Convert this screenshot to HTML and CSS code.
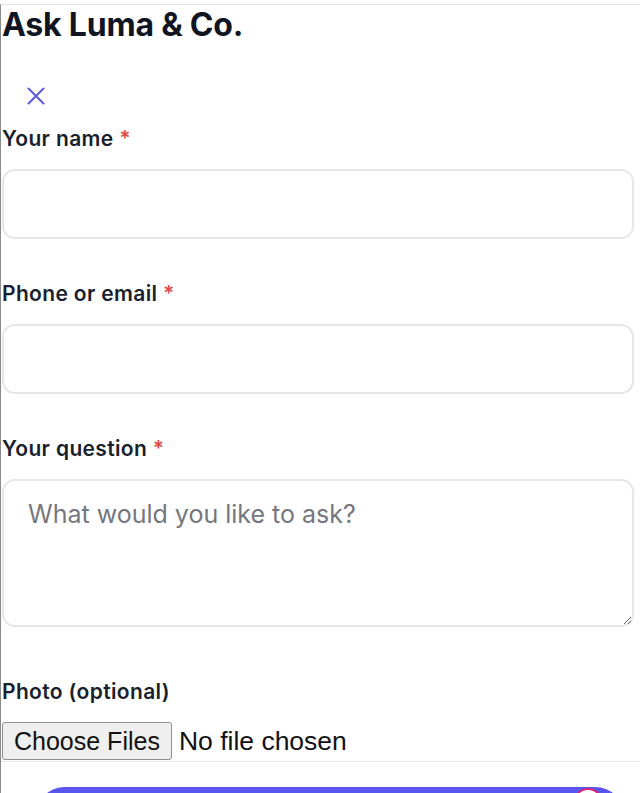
FILE: index.html
```html
<!DOCTYPE html>
<html lang="en">
<head>
<meta charset="utf-8">
<title>Ask Luma &amp; Co.</title>
<link rel="stylesheet" href="styles.css">
</head>
<body>
<div class="frame">
  <form class="form">
    <h1 class="title">Ask Luma &amp; Co.</h1>
    <button type="button" class="close" aria-label="Close">
      <svg width="18" height="18" viewBox="0 0 18 18" fill="none" stroke="currentColor" stroke-width="2" stroke-linecap="round"><path d="M1.5 1.5L16.5 16.5M16.5 1.5L1.5 16.5"/></svg>
    </button>
    <div class="field field-first">
      <label class="label" for="name">Your name <span class="req">*</span></label>
      <input class="input" id="name" type="text">
    </div>
    <div class="field">
      <label class="label" for="contact">Phone or email <span class="req">*</span></label>
      <input class="input" id="contact" type="text">
    </div>
    <div class="field">
      <label class="label" for="q">Your question <span class="req">*</span></label>
      <textarea class="textarea" id="q" placeholder="What would you like to ask?"></textarea>
    </div>
    <div class="field field-photo">
      <label class="label" for="photo">Photo (optional)</label>
      <input class="file" id="photo" type="file" multiple>
    </div>
  </form>
  <div class="footer">
    <div class="submit">
      <span class="bubble"></span>
    </div>
  </div>
</div>
</body>
</html>
```
FILE: styles.css
```css
html, body {
  margin: 0;
  padding: 0;
  background: #ffffff;
  overflow: hidden;
}
body {
  font-family: Inter, "Noto Sans", sans-serif;
  color: #161b2c;
}
.frame {
  margin-top: 4px;
  border-top: 1px solid #e3e3e3;
  border-left: 1px solid #8a8a8a;
  height: 800px;
}
.form {
  padding: 0 6px 1px 1px;
}
.title {
  margin: 0;
  padding-top: 1px;
  font-size: 32px;
  line-height: 38px;
  font-weight: 700;
  color: #111522;
  letter-spacing: -0.2px;
}
.close {
  display: flex;
  width: 18px;
  height: 18px;
  padding: 0;
  margin: 43px 0 0 25px;
  border: 0;
  background: none;
  color: #5b5bdc;
}
.field {
  margin-top: 43px;
}
.field-first {
  margin-top: 22px;
}
.field-photo {
  margin-top: 53px;
}
.label {
  display: block;
  font-size: 21px;
  line-height: 24px;
  font-weight: 600;
  letter-spacing: 0.35px;
  color: #1a1f2e;
}
.req {
  color: #e24a4a;
}
.input,
.textarea {
  display: block;
  box-sizing: border-box;
  width: 100%;
  margin: 18px 0 0;
  border: 2px solid #e5e6ea;
  border-radius: 13px;
  background: #fff;
  font-family: Inter, "Noto Sans", sans-serif;
  font-size: 25px;
  color: #1a1f2e;
  outline: none;
}
.input {
  height: 70px;
  padding: 0 24px;
}
.textarea {
  height: 148px;
  padding: 15px 24px;
  line-height: 36px;
  resize: vertical;
}
.textarea::placeholder {
  color: #75777d;
}
.file {
  display: block;
  margin-top: 18px;
  font-family: "Liberation Sans", Arial, sans-serif;
  font-size: 26.5px;
  color: #111;
  height: 38px;
}
.file::file-selector-button {
  font-family: "Liberation Sans", Arial, sans-serif;
  font-size: 25px;
  height: 38px;
  padding: 0 11px;
  margin: 0 7px 0 0;
  border: 1px solid #8f8f8f;
  border-radius: 3px;
  background: #efefef;
  color: #111;
}
.footer {
  border-top: 1px solid #e6e6e6;
  padding-top: 25px;
}
.submit {
  position: relative;
  height: 60px;
  margin: 0 15px 0 34px;
  border-radius: 30px;
  background: #5856ee;
}
.bubble {
  position: absolute;
  left: 538px;
  top: 1px;
  width: 26px;
  height: 26px;
  border-radius: 50%;
  background: #fff;
  border: 2px solid #d8287a;
}
```
